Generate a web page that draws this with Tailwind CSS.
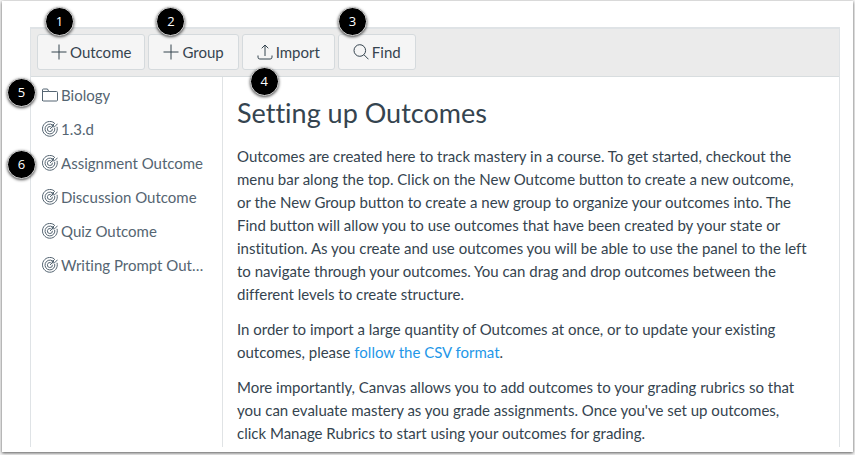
<!DOCTYPE html>
<html lang="en">
<head>
  <meta charset="UTF-8" />
  <meta name="viewport" content="width=device-width, initial-scale=1.0"/>
  <title>Outcomes</title>
  <script src="https://cdn.jsdelivr.net/npm/@tailwindcss/browser@4"></script>
</head>
<body class="bg-[#f4f4f4] h-screen pt-px px-[2px] pb-[3px] font-['Lato',sans-serif] text-[#35444f] [font-variant-ligatures:none]">
  <!-- Shared icons -->
  <svg class="hidden">
    <symbol id="plus" viewBox="0 0 16 16"><path d="M8 .5v15M.5 8h15"/></symbol>
    <symbol id="target" viewBox="0 0 16 16">
      <path d="M12.3 1.9A7.4 7.4 0 1 0 15 5.8M10.6 3.9A4.9 4.9 0 1 0 12.7 6.9M8.8 5.7A2.5 2.5 0 1 0 10.4 7.8"/>
      <path d="M8 8l4-4M10.2 3.4v2.4h2.4L15.6 2.7M10.2 4.8l2.6-2.6"/>
    </symbol>
  </svg>

  <div class="h-full bg-white pl-7 pt-[26px] pb-[5px] pr-[13px] shadow-[0_1px_3px_rgba(0,0,0,0.65)]">
    <div class="h-full flex flex-col border-t-2 border-x border-[#dfe3e6]">
      <!-- Toolbar -->
      <div class="flex gap-[3px] px-[6px] pt-[5px] pb-[6px] bg-[#ebebeb] border-b border-[#d8dddf]">
        <div class="relative">
          <button class="flex items-center gap-[3px] h-9 px-[13px] rounded-[3px] border border-[#d5dadd] bg-[#f5f5f5] text-[15px]">
            <svg class="size-4 fill-none stroke-current"><use href="#plus"/></svg>Outcome
          </button>
          <span class="absolute left-2 -top-[27px] flex items-center justify-center size-[29px] rounded-full bg-black border border-[#ddd] text-white text-[13px] font-['Open_Sans',sans-serif] shadow-[0_1px_3px_rgba(0,0,0,0.7)]">1</span>
        </div>
        <div class="relative">
          <button class="flex items-center gap-[3px] h-9 px-[14px] rounded-[3px] border border-[#d5dadd] bg-[#f5f5f5] text-[15px]">
            <svg class="size-4 fill-none stroke-current"><use href="#plus"/></svg>Group
          </button>
          <span class="absolute left-2 -top-[27px] flex items-center justify-center size-[29px] rounded-full bg-black border border-[#ddd] text-white text-[13px] font-['Open_Sans',sans-serif] shadow-[0_1px_3px_rgba(0,0,0,0.7)]">2</span>
        </div>
        <div class="relative">
          <button class="flex items-center gap-[3px] h-9 px-[14px] rounded-[3px] border border-[#d5dadd] bg-[#f5f5f5] text-[15px]">
            <svg class="size-4 fill-none stroke-current" viewBox="0 0 16 16"><path d="M8 12V1.2M4.7 4.3L8 1l3.3 3.3M1 11.5v1.7q0 1.8 1.8 1.8h10.4q1.8 0 1.8-1.8v-1.7"/></svg>Import
          </button>
          <span class="absolute left-2 top-[33px] flex items-center justify-center size-[29px] rounded-full bg-black border border-[#ddd] text-white text-[13px] font-['Open_Sans',sans-serif] shadow-[0_1px_3px_rgba(0,0,0,0.7)]">4</span>
        </div>
        <div class="relative">
          <button class="flex items-center gap-[3px] h-9 px-[14px] rounded-[3px] border border-[#d5dadd] bg-[#f5f5f5] text-[15px]">
            <svg class="size-4 fill-none stroke-current" viewBox="0 0 16 16"><circle cx="6.8" cy="6.5" r="5.8"/><path d="M10.9 10.7l4.6 4.6"/></svg>Find
          </button>
          <span class="absolute left-0 -top-[27px] flex items-center justify-center size-[29px] rounded-full bg-black border border-[#ddd] text-white text-[13px] font-['Open_Sans',sans-serif] shadow-[0_1px_3px_rgba(0,0,0,0.7)]">3</span>
        </div>
      </div>

      <div class="flex flex-1 min-h-0">
        <!-- Outcome list -->
        <ul class="w-48 shrink-0 border-r border-[#e0e3e5] pt-px text-[15px] text-[#556572]">
          <li class="relative">
            <a href="#" class="flex items-center gap-[3px] h-[34px] pl-[11px] pr-3">
              <svg class="size-4 shrink-0 fill-none stroke-current" viewBox="0 0 16 16"><path d="M.5 14V3q0-1 1-1h4l1.3 2.5h7.7q1 0 1 1V13q0 1-1 1h-13q-1 0-1-1M.5 4.5h6.3"/></svg>
              <span class="truncate">Biology</span>
            </a>
            <span class="absolute -left-6 top-0 flex items-center justify-center size-[29px] rounded-full bg-black border border-[#ddd] text-white text-[13px] font-['Open_Sans',sans-serif] shadow-[0_1px_3px_rgba(0,0,0,0.7)]">5</span>
          </li>
          <li>
            <a href="#" class="flex items-center gap-[3px] h-[34px] pl-[11px] pr-3">
              <svg class="size-4 shrink-0 fill-none stroke-current"><use href="#target"/></svg>
              <span class="truncate">1.3.d</span>
            </a>
          </li>
          <li class="relative">
            <a href="#" class="flex items-center gap-[3px] h-[34px] pl-[11px] pr-3">
              <svg class="size-4 shrink-0 fill-none stroke-current"><use href="#target"/></svg>
              <span class="truncate">Assignment Outcome</span>
            </a>
            <span class="absolute -left-6 top-1 flex items-center justify-center size-[29px] rounded-full bg-black border border-[#ddd] text-white text-[13px] font-['Open_Sans',sans-serif] shadow-[0_1px_3px_rgba(0,0,0,0.7)]">6</span>
          </li>
          <li>
            <a href="#" class="flex items-center gap-[3px] h-[34px] pl-[11px] pr-3">
              <svg class="size-4 shrink-0 fill-none stroke-current"><use href="#target"/></svg>
              <span class="truncate">Discussion Outcome</span>
            </a>
          </li>
          <li>
            <a href="#" class="flex items-center gap-[3px] h-[34px] pl-[11px] pr-3">
              <svg class="size-4 shrink-0 fill-none stroke-current"><use href="#target"/></svg>
              <span class="truncate">Quiz Outcome</span>
            </a>
          </li>
          <li>
            <a href="#" class="flex items-center gap-[3px] h-[34px] pl-[11px] pr-3">
              <svg class="size-4 shrink-0 fill-none stroke-current"><use href="#target"/></svg>
              <span class="truncate">Writing Prompt Outcome</span>
            </a>
          </li>
        </ul>

        <!-- Instructions -->
        <main class="flex-1 pl-[14px] pr-8 pt-4 text-[15px] leading-[23px]">
          <h1 class="mb-3 text-[27px] leading-10">Setting up Outcomes</h1>
          <p class="mb-3">Outcomes are created here to track mastery in a course. To get started, checkout the menu bar along the top. Click on the New Outcome button to create a new outcome, or the New Group button to create a new group to organize your outcomes into. The Find button will allow you to use outcomes that have been created by your state or institution. As you create and use outcomes you will be able to use the panel to the left to navigate through your outcomes. You can drag and drop outcomes between the different levels to create structure.</p>
          <p class="mb-3">In order to import a large quantity of Outcomes at once, or to update your existing outcomes, please <a href="#" class="text-[#1f97e8]">follow the CSV format</a>.</p>
          <p>More importantly, Canvas allows you to add outcomes to your grading rubrics so that you can evaluate mastery as you grade assignments. Once you've set up outcomes, click Manage Rubrics to start using your outcomes for grading.</p>
        </main>
      </div>
    </div>
  </div>
</body>
</html>
